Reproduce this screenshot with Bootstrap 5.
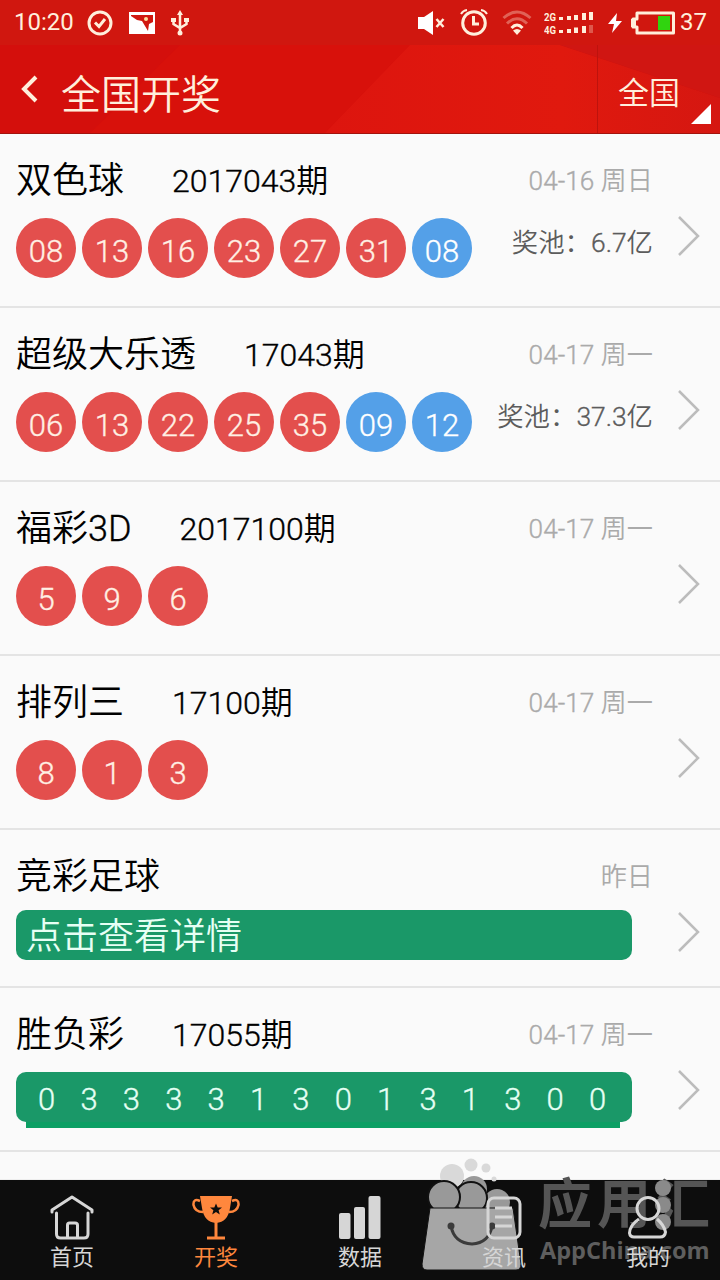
<!DOCTYPE html>
<html lang="zh-CN">
<head>
<meta charset="utf-8">
<meta name="viewport" content="width=device-width, initial-scale=1">
<title>全国开奖</title>
<link href="https://cdn.jsdelivr.net/npm/bootstrap@5.3.0/dist/css/bootstrap.min.css" rel="stylesheet">
<style>
  body { font-family: Roboto, "Noto Sans CJK SC", sans-serif; font-weight: 350; background: #fafafa; color: #000; height: 1280px; overflow: hidden; }
  svg { display: block; flex: none; }
  .num, .ball, .strip-match { font-weight: 300; -webkit-text-stroke: .35px currentColor; }
  .topbar { height: 134px; color: #ffefdc; background: #d80f0b; border-bottom: 1px solid #a3130d; isolation: isolate; }
  .facets { z-index: -1; }
  .status { height: 45px; padding: 0 13px 0 14px; font-size: 24px; font-weight: 400; }
  .status span { line-height: 45px; }
  .titlebar { height: 88px; }
  .title-text { font-size: 40px; line-height: 74px; margin-left: 22px; padding-top: 14px; }
  .region { width: 123px; padding: 10px 0 0 20px; font-size: 31px; line-height: 78px; border-left: 1px solid #bd130d; }
  .draw { height: 174px; border-bottom: 2px solid #e4e4e4; padding: 20px 0 0 16px; }
  .draw-link { height: 158px; }
  .draw-match { height: 164px; }
  .info { width: 637px; }
  .heading { height: 52px; line-height: 54px; }
  .name { font-size: 36px; margin-right: 48px; }
  .issue { font-size: 32px; }
  .when { font-size: 26.2px; line-height: 55px; color: #aaa; }
  .balls { gap: 6px; margin-top: 12px; }
  .ball { width: 60px; height: 60px; line-height: 67px; font-size: 31px; text-align: center; color: #fff0e4; background: #e34f4d; border-radius: 50%; }
  .ball-blue { background: #54a0e8; color: #fff; }
  .pool { font-size: 26.4px; line-height: 50px; color: #5c5c5c; }
  .arrow { margin: 61px 0 0 24px; }
  .strip { width: 616px; height: 50px; border-radius: 10px; background: #1a9868; color: #e6fff4; }
  .strip-link { margin-top: 8px; padding-left: 10px; font-size: 36px; line-height: 54px; }
  .strip-match { margin-top: 12px; padding: 0 25px 0 22px; font-size: 31px; line-height: 56px; }
  .strip-match span { width: 18px; }
  .strip-foot { width: 594px; height: 6px; margin-left: 10px; background: #0c9f64; }
  .tail { height: 28px; border-bottom: 1px solid #eee; }
  .tabs { height: 101px; background: #0d0d0d; color: #d6d6d6; font-size: 22px; font-weight: 400; }
  .tab { width: 144px; padding-top: 15px; line-height: 30px; z-index: 2; }
  .tab svg { margin-bottom: 2px; }
  .tab-on { color: #ff873d; }
  .stamp { left: 420px; top: 1156px; width: 300px; height: 124px; z-index: 1; }
  .stamp-name { left: 118px; top: 10px; font-size: 54px; letter-spacing: 5px; line-height: 80px; font-weight: 700; color: #555; white-space: nowrap; }
  .stamp-site { left: 120px; top: 78px; font-family: "Open Sans", sans-serif; font-size: 23.5px; font-weight: 700; line-height: 32px; color: #5e5e5e; }
</style>
</head>
<body>
<header class="topbar position-relative">
  <svg class="facets position-absolute top-0 start-0" width="720" height="133">
    <defs><linearGradient id="warm"><stop offset="0" stop-color="#dd150e"/><stop offset=".6" stop-color="#e0190e"/><stop offset="1" stop-color="#d51711"/></linearGradient></defs>
    <path d="M0 0H720V133H0z" fill="#d40f0c"/>
    <path d="M90 133L180 45H410L325 133z" fill="#d8110b"/>
    <path d="M325 133L410 45H560L720 98V133z" fill="url(#warm)"/>
    <path d="M560 45H720V98z" fill="#d01612"/>
    <path d="M0 0H720V45H0z" fill="#d0170f"/>
  </svg>
  <div class="status d-flex align-items-center">
    <span style="width:73px">10:20</span>
    <svg width="26" height="26" viewBox="0 0 26 26" fill="none" stroke="currentColor" stroke-width="3"><circle cx="13" cy="13" r="11"/><path d="M8 12.500l4 4 6-7.500"/></svg>
    <svg class="ms-3" width="26" height="22" viewBox="0 0 26 22"><path fill="#fff" fill-rule="evenodd" d="M0 0H26V22H0zM2 4L8 8L13 9L19 19L20 12L24 10V3H2z"/><circle cx="17" cy="7" r="2" fill="#ffe0a0"/></svg>
    <svg class="ms-3" width="18" height="26" viewBox="0 0 18 26" fill="none" stroke="currentColor" stroke-width="2.500"><path d="M9 3V23M2.500 9V14L9 18L15.500 14V9"/><path d="M9 0l3 5H6zM0 8h5v4H0zM13 8h5v4h-5z" fill="currentColor" stroke="none"/><circle cx="9" cy="23" r="2.500" fill="currentColor" stroke="none"/></svg>
    <svg class="ms-auto" width="27" height="24" viewBox="0 0 27 24"><path fill="#fff" d="M0 6H6L15 0V24L6 18H0z"/><path d="M18.500 8l7 8M25.500 8l-7 8" stroke="currentColor" stroke-width="2.500"/></svg>
    <svg style="margin-left:15px" width="28" height="27" viewBox="0 0 28 27" fill="none" stroke="currentColor" stroke-width="3"><circle cx="14" cy="14" r="11.300"/><path d="M13.500 7V15H19"/><path d="M1 5Q3 1.500 7 1M27 5Q25 1.500 21 1" stroke-width="2"/></svg>
    <svg style="margin-left:14px" width="30" height="26" viewBox="0 0 30 26" fill="none" stroke="currentColor" stroke-width="3"><path d="M1.500 8Q15-4 28.500 8M5 13.500Q15 4 25 13.500" opacity=".35"/><path d="M9.500 18Q15 12 20.500 18"/><path d="M11 20.500Q15 17.500 19 20.500L15 25z" fill="currentColor" stroke="none"/></svg>
    <svg style="margin-left:12px" width="50" height="28" viewBox="0 0 50 28" fill="currentColor" font-size="10.500" font-weight="700"><text x="0" y="12" textLength="12" lengthAdjust="spacingAndGlyphs">2G</text><text x="0" y="24.500" textLength="12" lengthAdjust="spacingAndGlyphs">4G</text><path d="M15 8h4v3h-4zM23 7h4v4h-4zM30 6h4v5h-4zM38 4h4v7h-4zM45 3h4v8h-4zM15 21h4v3h-4zM23 20h4v4h-4zM30 18.500h4v5.500h-4zM38 17h4v7h-4z"/><path d="M45 16h4v8h-4z" opacity=".3"/></svg>
    <svg style="margin-left:14px" width="14" height="20" viewBox="0 0 14 20"><path fill="#fff" d="M9 0L0 11H6L4 20L14 8H8z"/></svg>
    <svg style="margin:0 4px 0 9px" width="45" height="24" viewBox="0 0 45 24"><path d="M6 2H42.500V22H6V16H2V8H6z" fill="none" stroke="currentColor" stroke-width="3" stroke-linejoin="round"/><path d="M0 8H5V16H0z" fill="currentColor"/><path d="M27 5H39V19H27z" fill="#30d40f"/></svg>
    <span>37</span>
  </div>
  <div class="titlebar d-flex align-items-center">
    <svg style="margin-left:21px" width="18" height="28" viewBox="0 0 18 28" fill="none" stroke="currentColor" stroke-width="4"><path d="M15 2L3 14L15 26"/></svg>
    <span class="title-text">全国开奖</span>
    <div class="region ms-auto d-flex align-items-end">全国
      <svg style="margin:0 0 9px 11px" width="20" height="20" viewBox="0 0 20 20"><path d="M20 0V20H0z" fill="#fff"/></svg>
    </div>
  </div>
</header>

<main>
  <section class="draw d-flex">
    <div class="info">
      <div class="heading d-flex align-items-start"><span class="name">双色球</span><span class="issue"><span class="num">2017043</span>期</span><span class="when ms-auto"><span class="num">04-16</span> 周日</span></div>
      <div class="balls d-flex"><span class="ball">08</span><span class="ball">13</span><span class="ball">16</span><span class="ball">23</span><span class="ball">27</span><span class="ball">31</span><span class="ball ball-blue">08</span><span class="pool ms-auto">奖池：<span class="num">6.7</span>亿</span></div>
    </div>
    <svg class="arrow" width="24" height="42" viewBox="0 0 24 42" fill="none" stroke="#bcbcbc" stroke-width="2.500"><path d="M2 2L21 21L2 40"/></svg>
  </section>
  <section class="draw d-flex">
    <div class="info">
      <div class="heading d-flex align-items-start"><span class="name">超级大乐透</span><span class="issue"><span class="num">17043</span>期</span><span class="when ms-auto"><span class="num">04-17</span> 周一</span></div>
      <div class="balls d-flex"><span class="ball">06</span><span class="ball">13</span><span class="ball">22</span><span class="ball">25</span><span class="ball">35</span><span class="ball ball-blue">09</span><span class="ball ball-blue">12</span><span class="pool ms-auto">奖池：<span class="num">37.3</span>亿</span></div>
    </div>
    <svg class="arrow" width="24" height="42" viewBox="0 0 24 42" fill="none" stroke="#bcbcbc" stroke-width="2.500"><path d="M2 2L21 21L2 40"/></svg>
  </section>
  <section class="draw d-flex">
    <div class="info">
      <div class="heading d-flex align-items-start"><span class="name">福彩<span class="num">3D</span></span><span class="issue"><span class="num">2017100</span>期</span><span class="when ms-auto"><span class="num">04-17</span> 周一</span></div>
      <div class="balls d-flex"><span class="ball">5</span><span class="ball">9</span><span class="ball">6</span></div>
    </div>
    <svg class="arrow" width="24" height="42" viewBox="0 0 24 42" fill="none" stroke="#bcbcbc" stroke-width="2.500"><path d="M2 2L21 21L2 40"/></svg>
  </section>
  <section class="draw d-flex">
    <div class="info">
      <div class="heading d-flex align-items-start"><span class="name">排列三</span><span class="issue"><span class="num">17100</span>期</span><span class="when ms-auto"><span class="num">04-17</span> 周一</span></div>
      <div class="balls d-flex"><span class="ball">8</span><span class="ball">1</span><span class="ball">3</span></div>
    </div>
    <svg class="arrow" width="24" height="42" viewBox="0 0 24 42" fill="none" stroke="#bcbcbc" stroke-width="2.500"><path d="M2 2L21 21L2 40"/></svg>
  </section>
  <section class="draw draw-link d-flex">
    <div class="info">
      <div class="heading d-flex align-items-start"><span class="name">竞彩足球</span><span class="when ms-auto">昨日</span></div>
      <div class="strip strip-link">点击查看详情</div>
    </div>
    <svg class="arrow" width="24" height="42" viewBox="0 0 24 42" fill="none" stroke="#bcbcbc" stroke-width="2.500"><path d="M2 2L21 21L2 40"/></svg>
  </section>
  <section class="draw draw-match d-flex">
    <div class="info">
      <div class="heading d-flex align-items-start"><span class="name">胜负彩</span><span class="issue"><span class="num">17055</span>期</span><span class="when ms-auto"><span class="num">04-17</span> 周一</span></div>
      <div class="strip strip-match d-flex justify-content-between"><span>0</span><span>3</span><span>3</span><span>3</span><span>3</span><span>1</span><span>3</span><span>0</span><span>1</span><span>3</span><span>1</span><span>3</span><span>0</span><span>0</span></div>
      <div class="strip-foot"></div>
    </div>
    <svg class="arrow" width="24" height="42" viewBox="0 0 24 42" fill="none" stroke="#bcbcbc" stroke-width="2.500"><path d="M2 2L21 21L2 40"/></svg>
  </section>
  <div class="tail"></div>
</main>

<nav class="tabs d-flex">
  <div class="tab position-relative d-flex flex-column align-items-center">
    <svg width="44" height="46" viewBox="0 0 44 46" fill="none" stroke="currentColor" stroke-width="3" stroke-linejoin="round" stroke-linecap="round"><path d="M2 17V15L22 2L42 15V17M6.500 18V39Q6.500 43 10.500 43H34Q38 43 38 39V18M17.500 43V30Q17.500 28 19.500 28H25Q27.500 28 27.500 30V43"/></svg>
    <span>首页</span></div>
  <div class="tab tab-on position-relative d-flex flex-column align-items-center">
    <svg width="48" height="46" viewBox="0 0 48 46" fill="none" stroke="currentColor" stroke-width="2.500"><path d="M8 6Q1 3 1.500 10Q3 17 11 17M40 6Q47 3 46.500 10Q45 17 37 17"/><path d="M24 26V42M15 43H33" stroke-width="3"/><path fill="currentColor" stroke="none" d="M8 1H40L38 13Q36 27 24 28Q12 27 10 13z"/><path fill="#0d0d0d" stroke="none" d="M24 8.500l1.700 4h4.300l-3.400 2.800 1.200 4.200-3.800-2.400-3.800 2.400 1.200-4.200-3.400-2.800h4.300z"/></svg>
    <span>开奖</span></div>
  <div class="tab position-relative d-flex flex-column align-items-center">
    <svg width="44" height="46" viewBox="0 0 44 46" fill="currentColor"><rect x="1" y="18" width="11.500" height="26" rx="2"/><rect x="16" y="12" width="11" height="32" rx="2"/><rect x="30.500" y="1" width="12" height="43" rx="2"/></svg>
    <span>数据</span></div>
  <div class="tab position-relative d-flex flex-column align-items-center">
    <svg width="44" height="46" viewBox="0 0 44 46" fill="none" stroke="currentColor" stroke-width="3"><rect x="6" y="3" width="32" height="40" rx="6"/><path d="M13 13H30M13 22H30M13 31H30"/></svg>
    <span>资讯</span></div>
  <div class="tab position-relative d-flex flex-column align-items-center">
    <svg width="44" height="46" viewBox="0 0 44 46" fill="none" stroke="currentColor" stroke-width="3"><circle cx="22" cy="13.500" r="11"/><path d="M13 24Q4 30 3.500 38Q4 42 8 42H34Q39 42 39.500 37Q38 30 31 24"/></svg>
    <span>我的</span></div>
</nav>

<div class="stamp position-absolute">
  <svg class="position-absolute top-0 start-0" width="300" height="124" viewBox="0 0 300 124">
    <g fill="#d9d9d9"><circle cx="32" cy="20" r="12"/><circle cx="51" cy="9" r="6.500"/><circle cx="66" cy="12" r="4.500"/><circle cx="74" cy="23" r="2.500"/></g>
    <g fill="#999" stroke="#111" stroke-width="2"><circle cx="54" cy="33" r="13" stroke="none"/><circle cx="77" cy="46" r="13" stroke="none"/><circle cx="51" cy="42" r="16"/><circle cx="24" cy="41" r="16"/></g>
    <path d="M10 52H93L101 108Q101 114 96 114H7Q2 114 2 108z" fill="#a6a6a6" stroke="#111" stroke-width="1"/>
    <path d="M31 70Q34 87 52 88Q69 87 72 70" fill="none" stroke="#3b3b3b" stroke-width="3"/>
    <circle cx="31" cy="70" r="3.500" fill="#3b3b3b"/><circle cx="72" cy="70" r="3.500" fill="#3b3b3b"/>
  </svg>
  <span class="stamp-name position-absolute">应用汇</span>
  <span class="stamp-site position-absolute">AppChina.com</span>
  <svg class="position-absolute top-0 start-0" width="300" height="124"><g fill="#8a8a8a"><circle cx="243" cy="32" r="8"/><circle cx="243" cy="49" r="8"/><circle cx="243" cy="66" r="8"/></g></svg>
</div>
</body>
</html>
